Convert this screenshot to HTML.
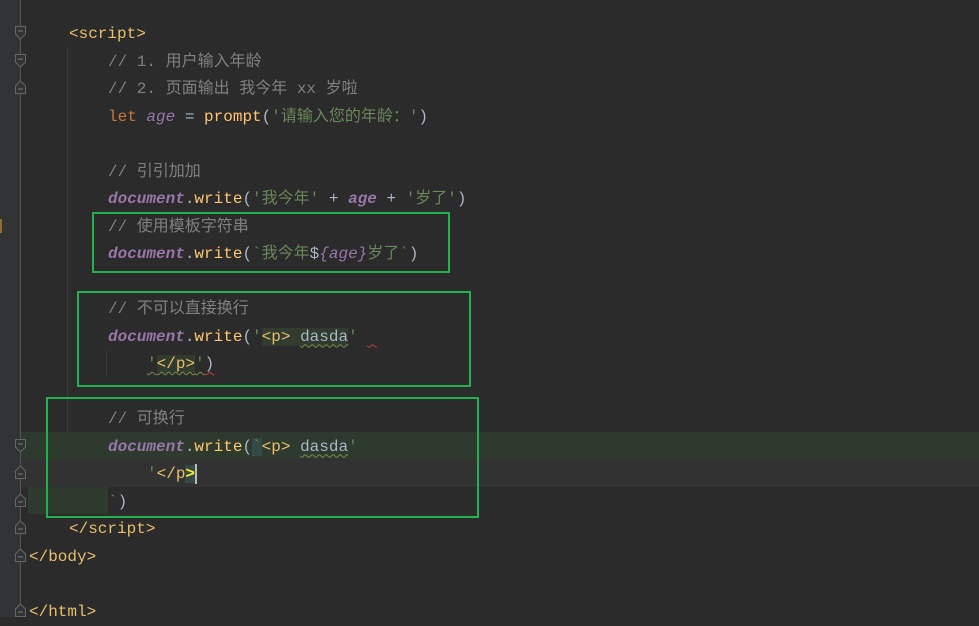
<!DOCTYPE html>
<html><head><meta charset="utf-8"><style>
html,body{margin:0;padding:0;width:979px;height:617px;overflow:hidden;background:#2b2b2b}
.g{position:absolute;left:0;top:0;width:20px;height:617px;background:#313335}
.gl{position:absolute;left:20px;top:0;width:1px;height:617px;background:#555}
.ig{position:absolute;width:1px;background:#393939}
.l{position:absolute;left:0;height:27.5px;line-height:27.5px;font-family:"Liberation Mono","Noto Sans CJK SC",monospace;font-size:16px;white-space:pre;color:#a9b7c6;margin-top:2px}
.c{color:#808080}.k{color:#cc7832}.t{color:#e8bf6a}.s{color:#6a8759}.d{color:#9876aa;font-style:italic;font-weight:bold}.v{color:#9876aa;font-style:italic}.f{color:#ffc66d}
.inj{background:#323b2f}
.w{text-decoration:underline wavy #7a8c4a;text-decoration-thickness:1px;text-underline-offset:3px}
.wr{text-decoration:underline wavy #bc3f3c;text-decoration-thickness:1px;text-underline-offset:3px}
.box{position:absolute;border:2px solid #22b14c;box-sizing:border-box}
.fold{position:absolute;left:15px;width:11px;height:14px}
</style></head><body>
<div class="g"></div>
<div style="position:absolute;left:0;top:219px;width:2px;height:14px;background:#8a6f2e"></div>
<div class="gl"></div>
<div class="ig" style="left:67px;top:47px;height:460px"></div>
<div class="ig" style="left:106px;top:350px;height:26px"></div>
<div style="position:absolute;left:21px;top:432px;width:958px;height:27px;background:#2f3a2f"></div>
<div style="position:absolute;left:21px;top:459px;width:958px;height:28px;background:#323232"></div>
<div style="position:absolute;left:28px;top:487px;width:80px;height:27px;background:#2f3a2f"></div>

<svg class="fold" style="top:26px" viewBox="0 0 11 14"><path d="M0.5 0.5H10.5V8L5.5 13L0.5 8Z" fill="#313335" stroke="#666"/><path d="M3 5H8" stroke="#777"/></svg>
<svg class="fold" style="top:54px" viewBox="0 0 11 14"><path d="M0.5 0.5H10.5V8L5.5 13L0.5 8Z" fill="#313335" stroke="#666"/><path d="M3 5H8" stroke="#777"/></svg>
<svg class="fold" style="top:80px" viewBox="0 0 11 14"><path d="M0.5 13.5H10.5V6L5.5 1L0.5 6Z" fill="#313335" stroke="#666"/><path d="M3 9H8" stroke="#777"/></svg>
<svg class="fold" style="top:439px" viewBox="0 0 11 14"><path d="M0.5 0.5H10.5V8L5.5 13L0.5 8Z" fill="#313335" stroke="#666"/><path d="M3 5H8" stroke="#777"/></svg>
<svg class="fold" style="top:465px" viewBox="0 0 11 14"><path d="M0.5 13.5H10.5V6L5.5 1L0.5 6Z" fill="#313335" stroke="#666"/><path d="M3 9H8" stroke="#777"/></svg>
<svg class="fold" style="top:493px" viewBox="0 0 11 14"><path d="M0.5 13.5H10.5V6L5.5 1L0.5 6Z" fill="#313335" stroke="#666"/><path d="M3 9H8" stroke="#777"/></svg>
<svg class="fold" style="top:520px" viewBox="0 0 11 14"><path d="M0.5 13.5H10.5V6L5.5 1L0.5 6Z" fill="#313335" stroke="#666"/><path d="M3 9H8" stroke="#777"/></svg>
<svg class="fold" style="top:548px" viewBox="0 0 11 14"><path d="M0.5 13.5H10.5V6L5.5 1L0.5 6Z" fill="#313335" stroke="#666"/><path d="M3 9H8" stroke="#777"/></svg>
<svg class="fold" style="top:603px" viewBox="0 0 11 14"><path d="M0.5 13.5H10.5V6L5.5 1L0.5 6Z" fill="#313335" stroke="#666"/><path d="M3 9H8" stroke="#777"/></svg>

<div class="l" style="top:19px;left:69px"><span class="t">&lt;script&gt;</span></div>
<div class="l" style="top:46.5px;left:108px"><span class="c">// 1. 用户输入年龄</span></div>
<div class="l" style="top:74px;left:108px"><span class="c">// 2. 页面输出 我今年 xx 岁啦</span></div>
<div class="l" style="top:101.5px;left:108px"><span class="k">let </span><span class="v">age</span> = <span class="f">prompt</span>(<span class="s">'请输入您的年龄：'</span>)</div>
<div class="l" style="top:156.5px;left:108px"><span class="c">// 引引加加</span></div>
<div class="l" style="top:184px;left:108px"><span class="d">document</span>.<span class="f">write</span>(<span class="s">'我今年'</span> + <span class="d">age</span> + <span class="s">'岁了'</span>)</div>
<div class="l" style="top:211.5px;left:108px"><span class="c">// 使用模板字符串</span></div>
<div class="l" style="top:239px;left:108px"><span class="d">document</span>.<span class="f">write</span>(<span class="s">`我今年</span>$<span class="v">{age}</span><span class="s">岁了`</span>)</div>
<div class="l" style="top:294px;left:108px"><span class="c">// 不可以直接换行</span></div>
<div class="l" style="top:321.5px;left:108px"><span class="d">document</span>.<span class="f">write</span>(<span class="s">'</span><span class="inj"><span class="t">&lt;p&gt;</span> <span class="w">dasda</span></span><span class="s">'</span> <span class="wr"> </span></div>
<div class="l" style="top:349px;left:147px"><span class="w"><span class="s">'</span><span class="inj t">&lt;/p&gt;</span><span class="s">'</span></span><span class="wr">)</span></div>
<div class="l" style="top:404px;left:108px"><span class="c">// 可换行</span></div>
<div class="l" style="top:431.5px;left:108px"><span class="d">document</span>.<span class="f">write</span>(<span class="s" style="background:#344a47">`</span><span class="t">&lt;p&gt;</span> <span class="w">dasda</span><span class="s">'</span></div>
<div class="l" style="top:459px;left:147px"><span class="s">'</span><span class="t">&lt;/p</span><span style="background:#344a47;color:#ffef28;font-weight:bold">&gt;</span><span style="display:inline-block;width:2px;height:20px;background:#bbb;vertical-align:middle"></span></div>
<div class="l" style="top:486.5px;left:108px"><span class="s">`</span>)</div>
<div class="l" style="top:514px;left:69px"><span class="t">&lt;/script&gt;</span></div>
<div class="l" style="top:541.5px;left:29px"><span class="t">&lt;/body&gt;</span></div>
<div class="l" style="top:596.5px;left:29px"><span class="t">&lt;/html&gt;</span></div>

<div class="box" style="left:92px;top:212px;width:358px;height:61px"></div>
<div class="box" style="left:77px;top:291px;width:394px;height:96px"></div>
<div class="box" style="left:46px;top:397px;width:433px;height:121px"></div>
</body></html>
